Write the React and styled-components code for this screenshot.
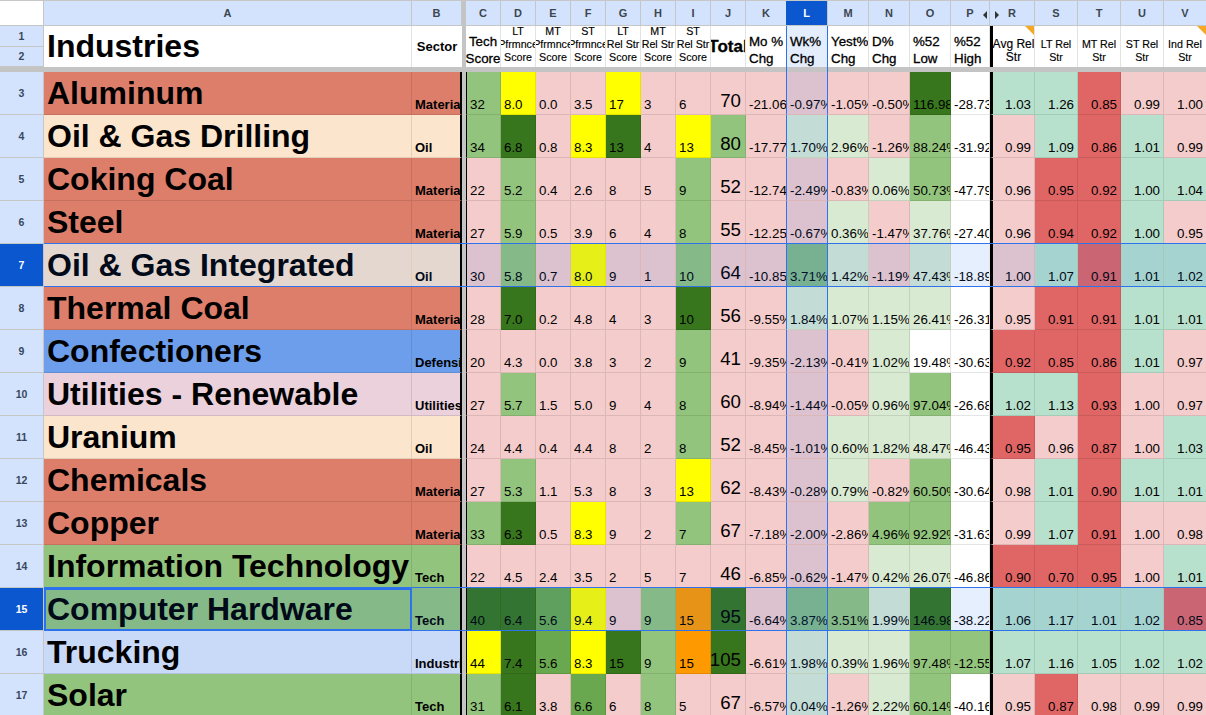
import React from 'react';
import styled, { createGlobalStyle, css } from 'styled-components';

const COLS = '44px 368px 50px 4px repeat(8, 35px) repeat(5, 41px) 39px 45px repeat(4, 43px)';
const BLUE = '#2f72ee';
const ACTIVE = '#0b57d0';
const HEAD = '#d3e3fd';
const STRIP = '#c4c4c4';

const tones = {
  p: '#f4cccc',
  g: '#93c47d',
  d: '#38761d',
  h: '#6aa84f',
  y: '#ffff00',
  o: '#ff9900',
  l: '#d9ead3',
  w: '#ffffff',
  m: '#b7e1cd',
  r: '#e06666',
};

const sectors = {
  salmon: '#dd7e6b',
  peach: '#fce5cd',
  blue: '#6d9eeb',
  plum: '#ead1dc',
  green: '#93c47d',
  sky: '#c9daf8',
};

const letters = ['C', 'D', 'E', 'F', 'G', 'H', 'I', 'J', 'K', 'L', 'M', 'N', 'O', 'P', 'R', 'S', 'T', 'U', 'V'];

const headers = [
  { lines: ['Tech', 'Score'] },
  { lines: ['LT', 'Pfrmnce', 'Score'], small: true },
  { lines: ['MT', 'Pfrmnce', 'Score'], small: true },
  { lines: ['ST', 'Pfrmnce', 'Score'], small: true },
  { lines: ['LT', 'Rel Str', 'Score'], small: true },
  { lines: ['MT', 'Rel Str', 'Score'], small: true },
  { lines: ['ST', 'Rel Str', 'Score'], small: true },
  { lines: ['Total'], big: true },
  { lines: ['Mo %', 'Chg'], left: true },
  { lines: ['Wk%', 'Chg'], left: true },
  { lines: ['Yest%', 'Chg'], left: true },
  { lines: ['D%', 'Chg'], left: true },
  { lines: ['%52', 'Low'], left: true },
  { lines: ['%52', 'High'], left: true },
  { lines: ['Avg Rel', 'Str'], small: true, note: true, wide: true },
  { lines: ['LT Rel', 'Str'], small: true },
  { lines: ['MT Rel', 'Str'], small: true },
  { lines: ['ST Rel', 'Str'], small: true },
  { lines: ['Ind Rel', 'Str'], small: true, note: true },
];

// each cell is "value:tone", tone keys are in the tones map
const rows = [
  { n: 3, name: 'Aluminum', sector: 'Materials', fill: 'salmon', cells: '32:g 8.0:y 0.0:p 3.5:p 17:y 3:p 6:p 70:p -21.06%:p -0.97%:p -1.05%:p -0.50%:p 116.98%:d -28.73%:w 1.03:m 1.26:m 0.85:r 0.99:p 1.00:p' },
  { n: 4, name: 'Oil & Gas Drilling', sector: 'Oil', fill: 'peach', cells: '34:g 6.8:d 0.8:p 8.3:y 13:d 4:p 13:y 80:g -17.77%:p 1.70%:l 2.96%:l -1.26%:p 88.24%:g -31.92%:w 0.99:p 1.09:m 0.86:r 1.01:m 0.99:p' },
  { n: 5, name: 'Coking Coal', sector: 'Materials', fill: 'salmon', cells: '22:p 5.2:g 0.4:p 2.6:p 8:p 5:p 9:g 52:p -12.74%:p -2.49%:p -0.83%:p 0.06%:l 50.73%:g -47.79%:w 0.96:p 0.95:r 0.92:r 1.00:m 1.04:m' },
  { n: 6, name: 'Steel', sector: 'Materials', fill: 'salmon', cells: '27:p 5.9:g 0.5:p 3.9:p 6:p 4:p 8:g 55:p -12.25%:p -0.67%:p 0.36%:l -1.47%:p 37.76%:l -27.40%:w 0.96:p 0.94:r 0.92:r 1.00:m 0.95:p' },
  { n: 7, name: 'Oil & Gas Integrated', sector: 'Oil', fill: 'peach', active: true, cells: '30:p 5.8:g 0.7:p 8.0:y 9:p 1:p 10:g 64:p -10.85%:p 3.71%:g 1.42%:l -1.19%:p 47.43%:l -18.89%:w 1.00:p 1.07:m 0.91:r 1.01:m 1.02:m' },
  { n: 8, name: 'Thermal Coal', sector: 'Materials', fill: 'salmon', cells: '28:p 7.0:d 0.2:p 4.8:p 4:p 3:p 10:d 56:p -9.55%:p 1.84%:l 1.07%:l 1.15%:l 26.41%:l -26.31%:w 0.95:p 0.91:r 0.91:r 1.01:m 1.01:m' },
  { n: 9, name: 'Confectioners', sector: 'Defensive', fill: 'blue', cells: '20:p 4.3:p 0.0:p 3.8:p 3:p 2:p 9:g 41:p -9.35%:p -2.13%:p -0.41%:p 1.02%:l 19.48%:w -30.63%:w 0.92:r 0.85:r 0.86:r 1.01:m 0.97:p' },
  { n: 10, name: 'Utilities - Renewable', sector: 'Utilities', fill: 'plum', cells: '27:p 5.7:g 1.5:p 5.0:p 9:p 4:p 8:g 60:p -8.94%:p -1.44%:p -0.05%:p 0.96%:l 97.04%:g -26.68%:w 1.02:m 1.13:m 0.93:r 1.00:p 0.97:p' },
  { n: 11, name: 'Uranium', sector: 'Oil', fill: 'peach', cells: '24:p 4.4:p 0.4:p 4.4:p 8:p 2:p 8:g 52:p -8.45%:p -1.01%:p 0.60%:l 1.82%:l 48.47%:l -46.43%:w 0.95:r 0.96:p 0.87:r 1.00:p 1.03:m' },
  { n: 12, name: 'Chemicals', sector: 'Materials', fill: 'salmon', cells: '27:p 5.3:g 1.1:p 5.3:p 8:p 3:p 13:y 62:p -8.43%:p -0.28%:p 0.79%:l -0.82%:p 60.50%:g -30.64%:w 0.98:p 1.01:m 0.90:r 1.01:m 1.01:m' },
  { n: 13, name: 'Copper', sector: 'Materials', fill: 'salmon', cells: '33:g 6.3:d 0.5:p 8.3:y 9:p 2:p 7:g 67:p -7.18%:p -2.00%:p -2.86%:p 4.96%:g 92.92%:g -31.63%:w 0.99:p 1.07:m 0.91:r 1.00:p 0.98:p' },
  { n: 14, name: 'Information Technology', sector: 'Tech', fill: 'green', cells: '22:p 4.5:p 2.4:p 3.5:p 2:p 5:p 7:p 46:p -6.85%:p -0.62%:p -1.47%:p 0.42%:l 26.07%:l -46.86%:w 0.90:r 0.70:r 0.95:r 1.00:p 1.01:m' },
  { n: 15, name: 'Computer Hardware', sector: 'Tech', fill: 'green', active: true, cells: '40:d 6.4:d 5.6:h 9.4:y 9:p 9:g 15:o 95:d -6.64%:p 3.87%:g 3.51%:g 1.99%:l 146.98%:d -38.22%:w 1.06:m 1.17:m 1.01:m 1.02:m 0.85:r' },
  { n: 16, name: 'Trucking', sector: 'Industrials', fill: 'sky', cells: '44:y 7.4:d 5.6:h 8.3:y 15:d 9:g 15:o 105:d -6.61%:p 1.98%:l 0.39%:l 1.96%:l 97.48%:g -12.55%:g 1.07:m 1.16:m 1.05:m 1.02:m 1.02:m' },
  { n: 17, name: 'Solar', sector: 'Tech', fill: 'green', cells: '31:g 6.1:d 3.8:p 6.6:h 6:p 8:g 5:p 67:p -6.57%:p 0.04%:l -1.26%:p 2.22%:l 60.14%:g -40.16%:w 0.95:p 0.87:r 0.98:p 0.99:p 0.99:p' },
];

const GlobalStyle = createGlobalStyle`
  html, body {
    margin: 0;
    height: 100%;
    background: #fff;
    overflow: hidden;
  }
  body {
    font-family: "Liberation Sans", Arial, sans-serif;
    color: #000;
  }
`;

const Sheet = styled.div`
  width: 1207px;
  height: 715px;
  overflow: hidden;
`;

const gridRow = css`
  display: grid;
  grid-template-columns: ${COLS};
`;

const LetterRow = styled.div`
  ${gridRow}
  height: 26px;
  box-sizing: border-box;
  border-top: 1px solid #c7c7c7;
`;

const Corner = styled.div`
  background: #fff;
  border-right: 1px solid #c4c7c5;
  border-bottom: 1px solid #c4c7c5;
`;

const ColLetter = styled.div`
  position: relative;
  display: flex;
  align-items: center;
  justify-content: center;
  box-sizing: border-box;
  background: ${p => (p.$active ? ACTIVE : HEAD)};
  color: ${p => (p.$active ? '#fff' : '#3c4650')};
  border-right: 1px solid #c4c7c5;
  border-bottom: 1px solid #c4c7c5;
  font-size: 11px;
  font-weight: 700;
  ${p => p.$active && css`margin-left: -1px;`}
`;

const HideArrow = styled.span`
  position: absolute;
  top: 10px;
  width: 0;
  height: 0;
  border-top: 4px solid transparent;
  border-bottom: 4px solid transparent;
  ${p => (p.$right
    ? css`left: 5px; border-left: 4px solid #333;`
    : css`right: 2px; border-right: 4px solid #333;`)}
`;

const TitleRow = styled.div`
  ${gridRow}
  height: 41px;
`;

const RowNums = styled.div`
  display: grid;
  grid-template-rows: 1fr 1fr;
`;

const RowNum = styled.div`
  display: flex;
  align-items: center;
  justify-content: center;
  box-sizing: border-box;
  background: ${p => (p.$active ? ACTIVE : HEAD)};
  color: ${p => (p.$active ? '#fff' : '#37475e')};
  border-right: 1px solid #c4c7c5;
  border-bottom: 1px solid #c4c7c5;
  font-size: 10.5px;
  font-weight: 700;
`;

const PageTitle = styled.div`
  display: flex;
  align-items: flex-end;
  box-sizing: border-box;
  padding: 0 0 2px 3px;
  border-right: 1px solid #e2e3e3;
  font-size: 32px;
  font-weight: 700;
`;

const SectorHead = styled.div`
  display: flex;
  align-items: center;
  justify-content: center;
  font-size: 13px;
  font-weight: 700;
  overflow: hidden;
`;

const Freeze = styled.div`
  background: ${STRIP};
`;

const HeadCell = styled.div`
  position: relative;
  display: flex;
  flex-direction: column;
  align-items: ${p => (p.$left ? 'flex-start' : 'center')};
  justify-content: ${p => (p.$big ? 'center' : 'flex-end')};
  box-sizing: border-box;
  padding: 0 ${p => (p.$left ? '3px' : '0')} ${p => (p.$small ? '3px' : '0')};
  overflow: hidden;
  white-space: nowrap;
  font-size: ${p => (p.$big ? '17px' : p.$small ? '10.67px' : '13.33px')};
  font-weight: ${p => (p.$big ? 700 : 400)};
  line-height: ${p => (p.$small ? '13px' : '17px')};
  border-right: 1px solid #e2e3e3;
  -webkit-text-stroke: ${p => (p.$small ? '0.15px' : '0.3px')};
  ${p => p.$wide && css`font-size: 12px;`}
  ${p => p.$thick && css`border-left: 3px solid #000;`}
  ${p => p.$col && css`
    margin-left: -1px;
    background: #e3edfc;
    border-left: 1px solid ${BLUE};
    border-right: 1px solid ${BLUE};
  `}
`;

const NoteMark = styled.span`
  position: absolute;
  top: 0;
  right: 0;
  width: 0;
  height: 0;
  border-left: 9px solid transparent;
  border-top: 9px solid #f6a723;
`;

const StripRow = styled.div`
  ${gridRow}
  height: 5px;
  background: ${STRIP};
`;

const StripMark = styled.div`
  grid-column: 14;
  margin-left: -1px;
  border-left: 1px solid ${BLUE};
  border-right: 1px solid ${BLUE};
`;

const Row = styled.div`
  ${gridRow}
  position: relative;
  height: 43px;
  ${p => p.$active && css`
    &::after {
      content: '';
      position: absolute;
      z-index: 3;
      left: 44px;
      right: 0;
      top: -1px;
      bottom: 0;
      border-top: 1px solid ${BLUE};
      border-bottom: 1px solid ${BLUE};
      pointer-events: none;
    }
  `}
`;

const tinted = css`
  ${p => p.$rowTint && css`
    &::after {
      content: '';
      position: absolute;
      inset: 0;
      background: rgba(14, 101, 235, 0.1);
    }
  `}
  ${p => p.$colTint && css`
    &::before {
      content: '';
      position: absolute;
      inset: 0;
      background: rgba(14, 101, 235, 0.1);
    }
  `}
`;

const cellBase = css`
  position: relative;
  display: flex;
  align-items: flex-end;
  box-sizing: border-box;
  overflow: hidden;
  white-space: nowrap;
  border-right: 1px solid rgba(0, 0, 0, 0.1);
  border-bottom: 1px solid rgba(0, 0, 0, 0.1);
  ${tinted}
`;

const NameCell = styled.div`
  ${cellBase}
  background: ${p => sectors[p.$fill]};
  padding: 0 0 2px 3px;
  font-size: 32px;
  font-weight: 700;
  ${p => p.$focus && css`
    outline: 2px solid ${BLUE};
    outline-offset: -2px;
    z-index: 4;
  `}
`;

const SectorCell = styled.div`
  ${cellBase}
  background: ${p => sectors[p.$fill]};
  padding: 0 0 2px 3px;
  border-right: 2px solid #000;
  font-size: 13px;
  font-weight: 700;
`;

const DataCell = styled.div`
  ${cellBase}
  background: ${p => tones[p.$tone]};
  justify-content: ${p => (p.$right ? 'flex-end' : 'flex-start')};
  padding: 0 3px 2px;
  font-size: 13.33px;
  ${p => p.$rule > 0 && css`border-left: ${p.$rule}px solid #000;`}
  ${p => p.$colTint && css`
    margin-left: -1px;
    padding-left: 3px;
    border-left: 1px solid ${BLUE};
    border-right: 1px solid ${BLUE};
  `}
`;

const TotalCell = styled(DataCell)`
  padding-right: 4px;
  padding-bottom: 2px;
  font-size: 18.67px;
`;

function App() {
  return (
    <Sheet>
      <GlobalStyle />
      <LetterRow>
        <Corner />
        <ColLetter>A</ColLetter>
        <ColLetter>B</ColLetter>
        <Freeze />
        {letters.map(l => (
          <ColLetter key={l} $active={l === 'L'}>
            {l}
            {l === 'P' && <HideArrow />}
            {l === 'R' && <HideArrow $right />}
          </ColLetter>
        ))}
      </LetterRow>
      <TitleRow>
        <RowNums>
          <RowNum>1</RowNum>
          <RowNum>2</RowNum>
        </RowNums>
        <PageTitle>Industries</PageTitle>
        <SectorHead>Sector</SectorHead>
        <Freeze />
        {headers.map((h, i) => (
          <HeadCell
            key={i}
            $small={h.small}
            $big={h.big}
            $left={h.left}
            $wide={h.wide}
            $col={i === 9}
            $thick={i === 14}
          >
            {h.lines.map(line => <span key={line}>{line}</span>)}
            {h.note && <NoteMark />}
          </HeadCell>
        ))}
      </TitleRow>
      <StripRow>
        <StripMark />
      </StripRow>
      {rows.map(row => (
        <Row key={row.n} $active={row.active}>
          <RowNum $active={row.active}>{row.n}</RowNum>
          <NameCell $fill={row.fill} $rowTint={row.active} $focus={row.n === 15}>
            <span>{row.name}</span>
          </NameCell>
          <SectorCell $fill={row.fill} $rowTint={row.active}>
            <span>{row.sector}</span>
          </SectorCell>
          <Freeze />
          {row.cells.split(' ').map((cell, i) => {
            const [value, tone] = cell.split(':');
            const Cell = i === 7 ? TotalCell : DataCell;
            return (
              <Cell
                key={i}
                $tone={tone}
                $right={i === 7 || i > 13}
                $rule={i === 0 ? 1 : i === 14 ? 3 : 0}
                $rowTint={row.active}
                $colTint={i === 9}
              >
                <span>{value}</span>
              </Cell>
            );
          })}
        </Row>
      ))}
    </Sheet>
  );
}

export default App;
